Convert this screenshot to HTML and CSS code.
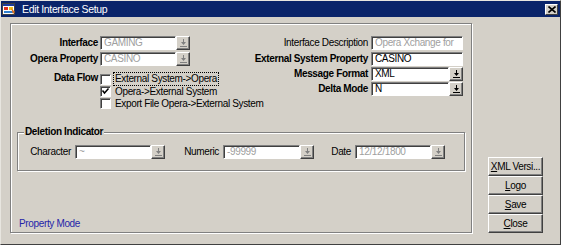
FILE: index.html
```html
<!DOCTYPE html>
<html lang="en">
<head>
    <meta charset="UTF-8">
    <title>Edit Interface Setup</title>
    <link rel="stylesheet" href="styles.css">
</head>
<body>
    <div class="window">
        <div class="titlebar">
            <svg class="app-icon" width="14" height="14" viewBox="0 0 14 14">
                <rect x="0.5" y="1.5" width="12" height="11" fill="#fff" stroke="#404040"/>
                <rect x="1" y="2" width="11" height="2" fill="#1c3c9c"/>
                <rect x="2" y="5" width="4" height="3" fill="#e03020"/>
                <rect x="7" y="5" width="4" height="3" fill="#f0c020"/>
                <rect x="2" y="9" width="9" height="2" fill="#3080d0"/>
                <path d="M9 6 L13 10 L11 12 Z" fill="#e07020"/>
            </svg>
            <span class="title">Edit Interface Setup</span>
            <span class="close-btn">
                <svg width="8" height="7" viewBox="0 0 8 7"><path d="M0.5 0.5 L7.5 6.5 M7.5 0.5 L0.5 6.5" stroke="#000" stroke-width="1.6"/></svg>
            </span>
        </div>

        <div class="body">
            <div class="panel">
                <div class="top">
                    <div class="form-left">
                        <label class="lbl bold">Interface</label>
                        <div class="combo off">
                            <span class="field">GAMING</span>
                            <span class="drop"><svg width="7" height="8" viewBox="0 0 7 8"><path d="M3 0h1v3h2l-2.5 3l-2.5-3h2z M0 7h7v1h-7z"/></svg></span>
                        </div>
                        <label class="lbl bold">Opera Property</label>
                        <div class="combo off">
                            <span class="field">CASINO</span>
                            <span class="drop"><svg width="7" height="8" viewBox="0 0 7 8"><path d="M3 0h1v3h2l-2.5 3l-2.5-3h2z M0 7h7v1h-7z"/></svg></span>
                        </div>
                        <label class="lbl bold flow-lbl">Data Flow</label>
                        <div class="checks">
                            <div class="check-row">
                                <span class="box"></span>
                                <span class="focus">External System-&gt;Opera</span>
                            </div>
                            <div class="check-row">
                                <span class="box"><svg width="9" height="9" viewBox="0 0 9 9"><path d="M1.5 3.5 L3.5 6 L7.5 1.5" fill="none" stroke="#000" stroke-width="1.5"/></svg></span>
                                <span>Opera-&gt;External System</span>
                            </div>
                            <div class="check-row">
                                <span class="box"></span>
                                <span>Export File Opera-&gt;External System</span>
                            </div>
                        </div>
                    </div>

                    <div class="form-right">
                        <label class="lbl">Interface Description</label>
                        <span class="field off">Opera Xchange for</span>
                        <label class="lbl bold">External System Property</label>
                        <span class="field">CASINO</span>
                        <label class="lbl bold">Message Format</label>
                        <div class="combo">
                            <span class="field">XML</span>
                            <span class="drop"><svg width="7" height="8" viewBox="0 0 7 8"><path d="M3 0h1v3h2l-2.5 3l-2.5-3h2z M0 7h7v1h-7z"/></svg></span>
                        </div>
                        <label class="lbl bold">Delta Mode</label>
                        <div class="combo">
                            <span class="field">N</span>
                            <span class="drop"><svg width="7" height="8" viewBox="0 0 7 8"><path d="M3 0h1v3h2l-2.5 3l-2.5-3h2z M0 7h7v1h-7z"/></svg></span>
                        </div>
                    </div>
                </div>

                <div class="group">
                    <span class="group-title">Deletion Indicator</span>
                    <label class="lbl w-char">Character</label>
                    <div class="combo off c-char">
                        <span class="field">~</span>
                        <span class="drop"><svg width="7" height="8" viewBox="0 0 7 8"><path d="M3 0h1v3h2l-2.5 3l-2.5-3h2z M0 7h7v1h-7z"/></svg></span>
                    </div>
                    <label class="lbl w-num">Numeric</label>
                    <div class="combo off c-num">
                        <span class="field">-99999</span>
                        <span class="drop"><svg width="7" height="8" viewBox="0 0 7 8"><path d="M3 0h1v3h2l-2.5 3l-2.5-3h2z M0 7h7v1h-7z"/></svg></span>
                    </div>
                    <label class="lbl w-date">Date</label>
                    <div class="combo off c-date">
                        <span class="field">12/12/1800</span>
                        <span class="drop"><svg width="7" height="8" viewBox="0 0 7 8"><path d="M3 0h1v3h2l-2.5 3l-2.5-3h2z M0 7h7v1h-7z"/></svg></span>
                    </div>
                </div>

                <div class="mode">Property Mode</div>
            </div>

            <div class="buttons">
                <button class="btn"><u>X</u>ML Versi...</button>
                <button class="btn"><u>L</u>ogo</button>
                <button class="btn"><u>S</u>ave</button>
                <button class="btn"><u>C</u>lose</button>
            </div>
        </div>
    </div>
</body>
</html>
```

FILE: styles.css
```css
html {
  font-family: "Liberation Sans", Arial, sans-serif;
  font-size: 10px;
  letter-spacing: -0.35px;
}

body {
  margin: 0;
  background-color: #d4d0c8;
}

.window {
  box-sizing: border-box;
  width: 561px;
  height: 245px;
  background-color: #d4d0c8;
  border: 1px solid;
  border-color: #e8e6e0 #404040 #404040 #e8e6e0;
  display: flex;
  flex-direction: column;
}

/* title bar */
.titlebar {
  height: 16px;
  background-color: #0a246a;
  color: #fff;
  display: flex;
  align-items: center;
  flex-shrink: 0;
}

.app-icon {
  margin-left: 1px;
  margin-right: 6px;
}

.title {
  flex: 1;
  font-size: 10.5px;
  line-height: 16px;
}

.close-btn {
  box-sizing: border-box;
  width: 13px;
  height: 11px;
  margin-right: 2px;
  background-color: #d4d0c8;
  border: 1px solid;
  border-color: #fff #404040 #404040 #fff;
  display: flex;
  align-items: center;
  justify-content: center;
}

/* body */
.body {
  flex: 1;
  display: flex;
  gap: 16px;
  padding: 6px 17px 11px 9px;
}

.panel {
  box-sizing: border-box;
  width: 462px;
  height: 210px;
  border: 1px solid #808080;
  box-shadow: inset 1px 1px 0 #fff, 1px 1px 0 #fff;
  display: flex;
  flex-direction: column;
  padding-top: 12px;
}

.top {
  display: flex;
  justify-content: space-between;
}

.lbl {
  white-space: nowrap;
  text-align: right;
  color: #000;
  line-height: 14px;
}

.bold {
  font-weight: bold;
}

.form-left {
  display: grid;
  grid-template-columns: 86px 90px;
  grid-template-rows: 16px 16px auto;
  column-gap: 2px;
  margin-left: 1px;
}

.flow-lbl {
  margin-top: 3px;
}

.form-right {
  display: grid;
  grid-template-columns: auto 92px;
  grid-template-rows: 16px 15px 15px 15px;
  column-gap: 3px;
  margin-right: 8px;
}

/* inputs */
.field {
  box-sizing: border-box;
  display: block;
  height: 14px;
  line-height: 12px;
  padding-left: 3px;
  background-color: #fff;
  border: 1px solid;
  border-color: #808080 #fff #fff #808080;
  box-shadow: inset 1px 1px 0 #404040;
  overflow: hidden;
  white-space: nowrap;
  color: #000;
}

.off,
.off .field {
  color: #a0a0a0;
}

.combo {
  display: flex;
  height: 14px;
}

.combo .field {
  flex: 1;
  min-width: 0;
}

.drop {
  box-sizing: border-box;
  flex-shrink: 0;
  width: 14px;
  height: 14px;
  background-color: #d4d0c8;
  border: 1px solid;
  border-color: #fff #404040 #404040 #fff;
  box-shadow: inset -1px -1px 0 #808080;
  display: flex;
  align-items: center;
  justify-content: center;
  fill: #000;
}

.off .drop {
  fill: #808080;
}

/* checkboxes */
.checks {
  padding-top: 5px;
}

.check-row {
  display: flex;
  align-items: center;
  height: 12px;
  white-space: nowrap;
}

.box {
  box-sizing: border-box;
  flex-shrink: 0;
  width: 11px;
  height: 11px;
  background-color: #fff;
  border: 1px solid;
  border-color: #808080 #fff #fff #808080;
  box-shadow: inset 1px 1px 0 #404040;
  margin-right: 4px;
  display: flex;
  align-items: center;
  justify-content: center;
}

.focus {
  outline: 1px dotted #000;
  outline-offset: 0;
  padding: 0 1px;
  margin-left: -1px;
  line-height: 12px;
}

/* deletion indicator group */
.group {
  position: relative;
  box-sizing: border-box;
  height: 39px;
  margin: 23px 6px 0 6px;
  border: 1px solid #808080;
  box-shadow: inset 1px 1px 0 #fff, 1px 1px 0 #fff;
  display: flex;
  align-items: center;
  padding-top: 1px;
}

.group-title {
  position: absolute;
  top: -8px;
  left: 6px;
  padding: 0 1px;
  background-color: #d4d0c8;
  font-weight: bold;
  line-height: 14px;
}

.group .lbl {
  margin-right: 4px;
}

.w-char { width: 53px; }
.w-num { width: 54px; }
.w-date { width: 37px; }

.c-char { width: 90px; }
.c-num { width: 91px; }
.c-date { width: 90px; }

.mode {
  margin-top: auto;
  padding: 0 0 2px 8px;
  color: #2424a8;
  line-height: 12px;
}

/* side buttons */
.buttons {
  align-self: flex-end;
  display: flex;
  flex-direction: column;
  width: 55px;
}

.btn {
  box-sizing: border-box;
  height: 19px;
  padding: 0;
  font-family: inherit;
  font-size: 10px;
  letter-spacing: -0.35px;
  white-space: nowrap;
  color: #000;
  background-color: #d4d0c8;
  border: 1px solid;
  border-color: #fff #404040 #404040 #fff;
  box-shadow: inset -1px -1px 0 #808080;
}
```
